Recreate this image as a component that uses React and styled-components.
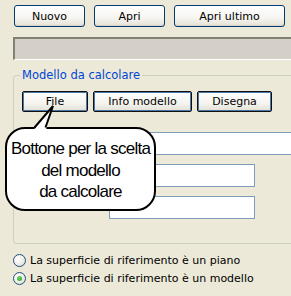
import styled, { createGlobalStyle } from 'styled-components';

const GlobalStyle = createGlobalStyle`
  html, body {
    margin: 0;
    background: #ece9d8;
    overflow: hidden;
  }
  body {
    font-family: "DejaVu Sans", Verdana, sans-serif;
    font-size: 11px;
    color: #000;
  }
`;

const Page = styled.div`
  position: relative;
  width: 291px;
  height: 296px;
  padding: 5px 0 0 13px;
  box-sizing: border-box;
`;

const Toolbar = styled.div`
  display: flex;
  gap: 9px;
  padding-left: 1px;
`;

const XpButton = styled.button`
  width: ${(p) => p.$w}px;
  height: 22px;
  padding: 0;
  font: inherit;
  font-size: 11px;
  color: #000;
  border: 1px solid #003c74;
  border-radius: 3px;
  background: linear-gradient(#ffffff 0%, #f6f5f0 60%, #e3e1d6 100%);
  box-shadow: inset 0 -1px 0 #d6d0c5;
`;

const StatusBar = styled.div`
  margin-top: 10px;
  height: 23px;
  background: #d4d0c8;
  border-top: 2px solid #808075;
  border-left: 2px solid #808075;
  border-bottom: 1px solid #ffffff;
  box-sizing: border-box;
`;

const GroupBox = styled.fieldset`
  margin: 8px 0 0;
  min-width: 0;
  box-sizing: border-box;
  padding: 0 0 24px 8px;
  border: 1px solid #d0d0bf;
  border-right: none;
  border-radius: 4px 0 0 4px;
`;

const GroupTitle = styled.legend`
  color: #0046d5;
  font-size: 11.5px;
  line-height: 14px;
  padding: 0 2px;
  margin-left: -2px;
`;

const ActionRow = styled.div`
  display: flex;
  gap: 5px;
  margin-top: 9px;
`;

const DarkButton = styled.button`
  width: ${(p) => p.$w}px;
  height: 21px;
  padding: 0;
  font: inherit;
  font-size: 11px;
  color: #000;
  border: 1px solid #111;
  border-radius: 2px;
  background: linear-gradient(#ffffff 0%, #f4f3ee 60%, #e2e0d5 100%);
  box-shadow: inset 0 0 0 1px #4b77a8;
`;

const Fields = styled.div`
  display: flex;
  flex-direction: column;
  align-items: flex-start;
  gap: 9px;
  margin: 20px 0 0 87px;
`;

const TextField = styled.div`
  height: 23px;
  width: ${(p) => (p.$wide ? '100%' : '146px')};
  background: #fff;
  border: 1px solid #7f9db9;
  border-right: ${(p) => (p.$wide ? 'none' : '1px solid #7f9db9')};
  box-sizing: border-box;
`;

const Options = styled.div`
  display: flex;
  flex-direction: column;
  margin-top: 7px;
`;

const OptionRow = styled.label`
  display: flex;
  align-items: center;
  gap: 4px;
  height: 18px;
`;

const RadioDot = styled.span`
  width: 13px;
  height: 13px;
  border-radius: 50%;
  border: 1px solid #1c5180;
  box-sizing: border-box;
  background: radial-gradient(circle at 35% 35%, #ffffff 0%, #f0efe8 50%, #d4d2c6 100%);
  display: flex;
  align-items: center;
  justify-content: center;

  &::after {
    content: '';
    width: 5px;
    height: 5px;
    border-radius: 50%;
    background: ${(p) => (p.$checked ? 'radial-gradient(circle at 40% 40%, #6fd36a, #21a121)' : 'transparent')};
  }
`;

const Callout = styled.div`
  position: absolute;
  left: 5px;
  top: 127px;
  width: 151px;
  height: 84px;
  box-sizing: border-box;
  background: #fff;
  border: 2px solid #000;
  border-radius: 20px;
  display: flex;
  align-items: center;
  justify-content: center;
  text-align: center;
  font-family: "Liberation Sans", Arial, sans-serif;
  font-size: 17px;
  letter-spacing: -0.75px;
  line-height: 21.5px;
  padding-top: 3px;
`;

const CalloutTail = styled.svg`
  position: absolute;
  left: 30px;
  top: 104px;
  overflow: visible;
`;

export default function App() {
  return (
    <>
      <GlobalStyle />
      <Page>
        <Toolbar>
          <XpButton $w={71}>Nuovo</XpButton>
          <XpButton $w={71}>Apri</XpButton>
          <XpButton $w={111}>Apri ultimo</XpButton>
        </Toolbar>
        <StatusBar />
        <GroupBox>
          <GroupTitle>Modello da calcolare</GroupTitle>
          <ActionRow>
            <DarkButton $w={66}>File</DarkButton>
            <DarkButton $w={99}>Info modello</DarkButton>
            <DarkButton $w={75}>Disegna</DarkButton>
          </ActionRow>
          <Fields>
            <TextField $wide />
            <TextField />
            <TextField />
          </Fields>
        </GroupBox>
        <Options>
          <OptionRow>
            <RadioDot />
            La superficie di riferimento è un piano
          </OptionRow>
          <OptionRow>
            <RadioDot $checked />
            La superficie di riferimento è un modello
          </OptionRow>
        </Options>
        <Callout>
          Bottone per la scelta
          <br />
          del modello
          <br />
          da calcolare
        </Callout>
        <CalloutTail width="30" height="28">
          <polygon points="4,25.5 23,2 16,25.5" fill="#fff" />
          <polyline points="4.5,23.5 23,2 15.5,23.5" fill="none" stroke="#000" strokeWidth="2" strokeLinejoin="miter" />
        </CalloutTail>
      </Page>
    </>
  );
}
